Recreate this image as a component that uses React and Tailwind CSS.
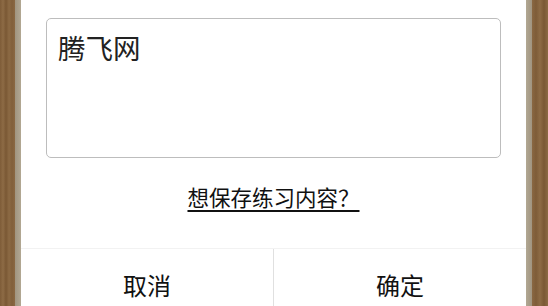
import { useState } from "react";

function App() {
    const [text, settext] = useState("腾飞网")

    return (
        <div className="h-[306px] w-[548px] overflow-hidden flex bg-[#7d5a36]" style={{ fontFamily: "'Noto Sans CJK SC', 'Noto Sans', sans-serif" }}>
            <div className="w-[15px] h-full bg-[linear-gradient(90deg,#7e5c38_0px,#8d6b45_3px,#7a5834_6px,#8c6a44_9px,#815f3b_12px,#8a6843_15px)]"></div>
            <div className="w-[6px] h-full bg-[linear-gradient(90deg,#a09480,#b2a893)]"></div>
            <div className="w-[505px] h-full bg-white flex flex-col">
                <div className="px-[25px] pt-[18px]">
                    <div className="h-[140px] border border-[#bdbdbd] rounded-[5px] px-[11px] pt-[10px] text-[27.5px] leading-[37px] text-[#222]">
                        {text}
                    </div>
                </div>
                <div className="flex justify-center pt-[24px]">
                    <p className="text-[21.5px] leading-[30px] text-[#111] underline underline-offset-[4px] cursor-pointer">想保存练习内容？</p>
                </div>
                <div className="mt-[36px] border-t border-[#f2f2f2] flex flex-1">
                    <button className="flex-1 text-[24px] text-[#111] pt-[18px] self-start">取消</button>
                    <div className="w-px bg-[#e0e0e0]"></div>
                    <button className="flex-1 text-[24px] text-[#111] pt-[18px] self-start" onClick={() => settext(text)}>确定</button>
                </div>
            </div>
            <div className="w-[6px] h-full bg-[linear-gradient(90deg,#b2a893,#a09480)]"></div>
            <div className="flex-1 h-full bg-[linear-gradient(90deg,#8a6843_0px,#7e5c38_4px,#8d6b45_8px,#7a5834_12px,#8c6a44_16px)]"></div>
        </div>
    )
}
export default App;
